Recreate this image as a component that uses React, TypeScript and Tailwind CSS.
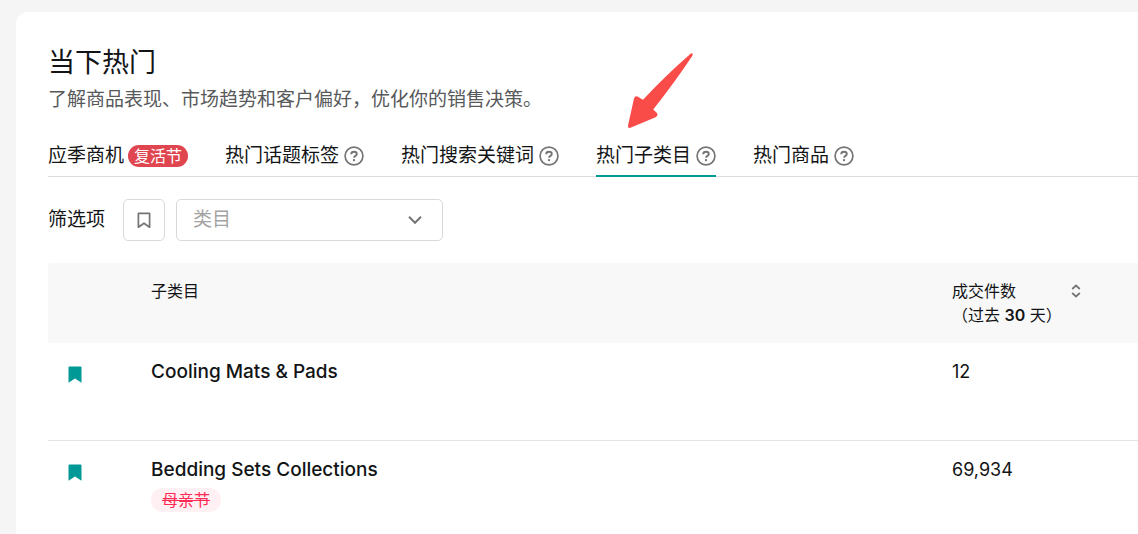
import React, { useState } from 'react';
import clsx from 'clsx';

interface Tab {
  id: string;
  label: string;
  badge?: string;
  help?: boolean;
}

interface Row {
  name: string;
  sold: string;
  tag?: string;
}

const tabs: Tab[] = [
  { id: 'season', label: '应季商机', badge: '复活节' },
  { id: 'hashtags', label: '热门话题标签', help: true },
  { id: 'keywords', label: '热门搜索关键词', help: true },
  { id: 'subcategories', label: '热门子类目', help: true },
  { id: 'products', label: '热门商品', help: true },
];

const rows: Row[] = [
  { name: 'Cooling Mats & Pads', sold: '12' },
  { name: 'Bedding Sets Collections', sold: '69,934', tag: '母亲节' },
];

const HelpIcon: React.FC = () => (
  <svg width="20" height="20" viewBox="0 0 20 20" fill="none" stroke="#757575" strokeWidth="1.7" aria-hidden="true">
    <circle cx="10" cy="10" r="8.9" />
    <path d="M7.2 8.2C7.2 6.5 8.4 5.7 10 5.7s2.8.9 2.8 2.3c0 1.900-2.700 1.900-2.700 3.800" strokeWidth="1.9" />
    <circle cx="10" cy="14.1" r="1.2" fill="#757575" stroke="none" />
  </svg>
);

const Bookmark: React.FC<{ filled?: boolean }> = ({ filled }) =>
  filled ? (
    <svg width="14" height="17" viewBox="0 0 14 17" aria-hidden="true">
      <path d="M1.5 0.5h11a1 1 0 0 1 1 1v15.2L7 12.4.5 16.7V1.5a1 1 0 0 1 1-1z" fill="#009995" />
    </svg>
  ) : (
    <svg width="14" height="17" viewBox="0 0 14 17" aria-hidden="true">
      <path d="M1.4 1.4h11.2v13.8L7 11.2l-5.6 4z" fill="none" stroke="#757575" strokeWidth="1.7" strokeLinejoin="round" />
    </svg>
  );

const Pointer: React.FC = () => (
  <svg className="absolute left-[30px] -top-[84px] pointer-events-none" width="68" height="78" viewBox="0 0 68 78" aria-hidden="true">
    <path
      d="M64 2.2Q65.6.8 66.4 1.6T66.2 4Q49 30 27.2 57.4L31 61Q32.4 63.5 29.6 65.2L4.4 75.8Q1.6 76.4 2 73.4L8 46.4Q9 43.6 11.4 44.6L17 47.8Q39 24 64 2.2z"
      fill="#f94b48"
    />
  </svg>
);

const TabBar: React.FC = () => {
  const [active, setActive] = useState('subcategories');

  return (
    <div role="tablist" className="mt-6 flex gap-[37px] border-b border-[#dcdcdc]">
      {tabs.map(tab => (
        <button
          key={tab.id}
          role="tab"
          aria-selected={active === tab.id}
          onClick={() => setActive(tab.id)}
          className={clsx(
            'relative -mb-px flex h-[41px] shrink-0 items-center border-b-2 whitespace-nowrap',
            active === tab.id ? 'border-[#009995]' : 'border-transparent'
          )}
        >
          {tab.label}
          {tab.badge && (
            <span className="ml-1 flex h-[22px] items-center rounded-full bg-[#e04650] px-1.5 text-base text-white">
              {tab.badge}
            </span>
          )}
          {tab.help && <span className="ml-[5px]"><HelpIcon /></span>}
          {tab.id === 'subcategories' && <Pointer />}
        </button>
      ))}
    </div>
  );
};

const Filters: React.FC = () => (
  <div className="mt-[22px] flex items-center">
    <label htmlFor="category">筛选项</label>
    <button
      aria-label="收藏"
      className="ml-[18px] flex size-[42px] items-center justify-center rounded-[5px] border border-[#d9d9d9]"
    >
      <Bookmark />
    </button>
    <div className="relative ml-[11px]">
      <select
        id="category"
        defaultValue=""
        className="h-[42px] w-[267px] appearance-none rounded-[5px] border border-[#d9d9d9] bg-white px-4 text-[#a3a3a3]"
      >
        <option value="">类目</option>
      </select>
      <svg className="absolute top-4 right-5 pointer-events-none" width="16" height="10" viewBox="0 0 16 10" aria-hidden="true">
        <path d="M2 1.8l6 6 6-6" fill="none" stroke="#757575" strokeWidth="2" />
      </svg>
    </div>
  </div>
);

const SubcategoryTable: React.FC = () => (
  <table className="mt-[22px] w-full table-fixed text-left">
    <colgroup>
      <col className="w-[103px]" />
      <col />
      <col className="w-[186px]" />
    </colgroup>
    <thead>
      <tr className="h-20 bg-[#f8f8f8] align-top text-base">
        <th className="rounded-tl" aria-label="收藏" />
        <th className="pt-4 font-normal">子类目</th>
        <th className="pt-4 font-normal">
          <div className="flex items-start">
            <div>
              成交件数
              <br />
              （过去 <span className="font-semibold">30</span> 天）
            </div>
            <button aria-label="排序" className="ml-[9px] pt-[5px]">
              <svg width="10" height="14" viewBox="0 0 10 14" fill="none" stroke="#757575" strokeWidth="1.7" aria-hidden="true">
                <path d="M1.2 5L5 1.5 8.8 5M1.2 9L5 12.5 8.8 9" />
              </svg>
            </button>
          </div>
        </th>
      </tr>
    </thead>
    <tbody>
      {rows.map(row => (
        <tr key={row.name} className="h-[97px] border-b border-[#e3e3e3] align-top">
          <td className="pt-[23px] pl-5">
            <button aria-label="取消收藏" className="block">
              <Bookmark filled />
            </button>
          </td>
          <td className="pt-[17px] font-medium">
            <div className="leading-6">{row.name}</div>
            {row.tag && (
              <s className="mt-[6px] flex h-6 w-fit items-center rounded-full bg-[#fff0f3] px-[11px] text-base font-normal text-[#fe2c55]">
                {row.tag}
              </s>
            )}
          </td>
          <td className="pt-[17px] text-lg leading-6">{row.sold}</td>
        </tr>
      ))}
    </tbody>
  </table>
);

export default function App() {
  return (
    <div className="flex h-screen overflow-hidden bg-[#f5f5f5] pt-3 pl-4 font-['Inter','Noto_Sans_CJK_SC',sans-serif] text-[19px] leading-6 font-normal text-[#121415]">
      <main className="flex-1 rounded-tl-xl bg-white pt-[33px] pl-8">
        <h1 className="text-[27px] leading-9">当下热门</h1>
        <p className="mt-[7px] leading-6 text-[#57595b]">了解商品表现、市场趋势和客户偏好，优化你的销售决策。</p>
        <TabBar />
        <Filters />
        <SubcategoryTable />
      </main>
    </div>
  );
}
